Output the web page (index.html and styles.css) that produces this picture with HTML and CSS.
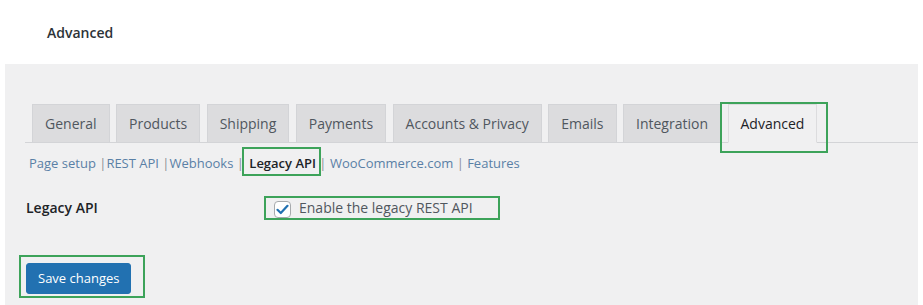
FILE: index.html
```html
<!DOCTYPE html>
<html lang="en">
<head>
<meta charset="UTF-8">
<meta name="viewport" content="width=device-width, initial-scale=1.0">
<title>WooCommerce Settings - Advanced</title>
<link rel="stylesheet" href="styles.css">
</head>
<body>

<div class="topbar">
	<h1>Advanced</h1>
</div>

<div class="wrap">
	<nav class="tabs">
		<a class="tab">General</a>
		<a class="tab">Products</a>
		<a class="tab">Shipping</a>
		<a class="tab">Payments</a>
		<a class="tab">Accounts &amp; Privacy</a>
		<a class="tab">Emails</a>
		<a class="tab">Integration</a>
		<a class="tab active mark">Advanced</a>
	</nav>

	<p class="subs"><a>Page setup</a> |<a>REST API</a> |<a>Webhooks</a> | <b class="current mark">Legacy API</b> | <a>WooCommerce.com</a> | <a>Features</a></p>

	<div class="row">
		<div class="th">Legacy API</div>
		<label class="check mark">
			<span class="box">
				<svg width="13" height="11" viewBox="0 0 13 11"><path d="M1.5 5.8 L4.8 9 L11.5 1.8" fill="none" stroke="#2271b1" stroke-width="2.2" stroke-linecap="round" stroke-linejoin="round"/></svg>
			</span>
			Enable the legacy REST API
		</label>
	</div>

	<div class="submit">
		<button class="btn mark">Save changes</button>
	</div>
</div>

</body>
</html>
```

FILE: styles.css
```css
* {
	margin: 0;
	padding: 0;
	box-sizing: border-box;
}
body {
	font-family: "Open Sans", "Noto Sans", sans-serif;
	color: #1d2327;
	background: #fff;
	height: 305px;
	overflow: hidden;
}
.topbar {
	height: 64px;
	padding-left: 47px;
}
.topbar h1 {
	font-size: 14px;
	font-weight: 600;
	line-height: 66px;
	color: #2c3338;
}
.wrap {
	margin-left: 5px;
	width: 913px;
	height: 241px;
	background: #f0f0f1;
	padding: 40px 0 0 20px;
}
.tabs {
	display: flex;
	gap: 6.5px;
	padding-left: 7px;
	border-bottom: 1px solid #d3d4d7;
}
.tab {
	position: relative;
	display: block;
	margin-bottom: -1px;
	padding: 7px 12px 6px;
	border: 1px solid #d3d4d7;
	background: #dcdcde;
	color: #50575e;
	font-size: 14px;
	line-height: 24px;
}
.tab.active {
	background: #f0f0f1;
	border-color: #dcdcde #dcdcde #f0f0f1;
	color: #1d2327;
}
.subs {
	margin: 10px 0 0 4px;
	font-size: 13px;
	line-height: 20px;
	color: #8c8f94;
}
.subs a {
	color: #5a80a6;
}
.current {
	position: relative;
	display: inline-block;
	font-weight: 600;
	color: #1d2327;
	margin-left: 2px;
}
.row {
	display: flex;
	margin: 23px 0 0 1px;
	line-height: 24px;
	font-size: 14px;
}
.th {
	width: 248px;
	font-weight: 600;
}
.check {
	position: relative;
	display: flex;
	align-items: center;
	gap: 8px;
	color: #50575e;
}
.box {
	display: flex;
	align-items: center;
	justify-content: center;
	width: 17px;
	height: 17px;
	margin-top: 2px;
	background: #fff;
	border: 1px solid #a7aaad;
	border-radius: 4px;
}
.submit {
	margin: 43px 0 0 1px;
}
.btn {
	position: relative;
	height: 31px;
	padding: 0 11px;
	border: 1px solid #2271b1;
	border-radius: 3px;
	background: #2271b1;
	color: #fff;
	font: 13px/29px "Open Sans", "Noto Sans", sans-serif;
}

/* green highlight boxes */
.mark::after {
	content: "";
	position: absolute;
	border: 2px solid #3da35a;
	pointer-events: none;
}
.tab.mark::after {
	top: -3px;
	left: -9px;
	right: -12px;
	bottom: -11px;
}
.current.mark::after {
	top: -6px;
	left: -7px;
	right: -5px;
	bottom: -3px;
}
.check.mark::after {
	top: 0;
	left: -10px;
	right: -27px;
	bottom: 0;
}
.btn.mark::after {
	top: -9px;
	left: -8px;
	right: -15px;
	bottom: -5px;
}
```
